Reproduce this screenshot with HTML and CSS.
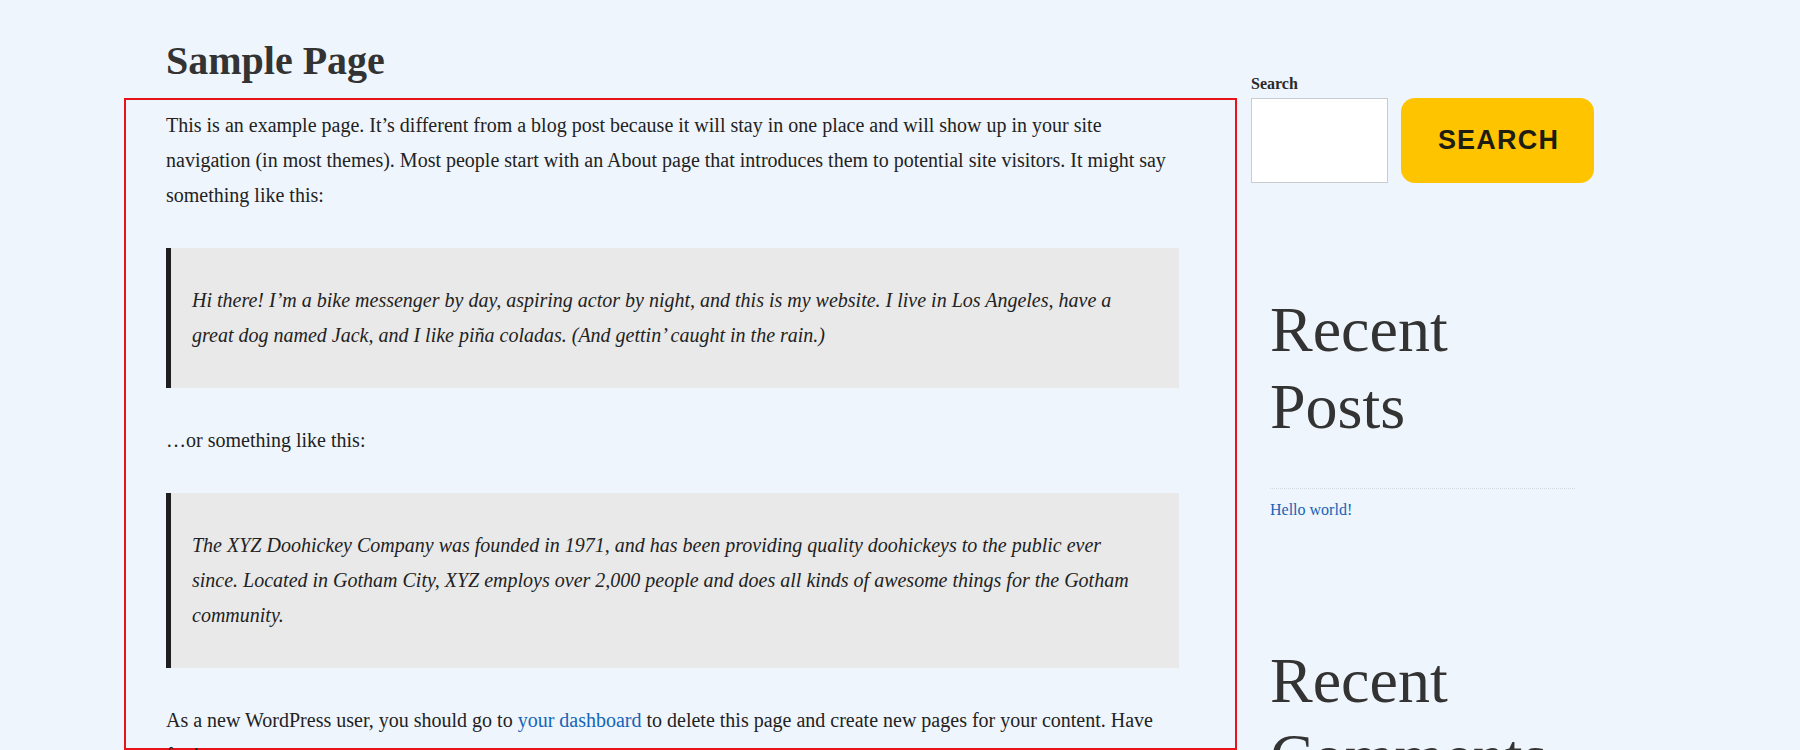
FILE: index.html
```html
<!DOCTYPE html>
<html lang="en">
<head>
<meta charset="utf-8">
<title>Sample Page</title>
<link rel="stylesheet" href="styles.css">
</head>
<body>
<div class="page">
  <main class="main">
    <h1 class="page-title">Sample Page</h1>
    <div class="entry">
      <p>This is an example page. It’s different from a blog post because it will stay in one place and will show up in your site navigation (in most themes). Most people start with an About page that introduces them to potential site visitors. It might say something like this:</p>
      <blockquote class="quote"><p>Hi there! I’m a bike messenger by day, aspiring actor by night, and this is my website. I live in Los Angeles, have a great dog named Jack, and I like piña coladas. (And gettin’ caught in the rain.)</p></blockquote>
      <p>…or something like this:</p>
      <blockquote class="quote"><p>The XYZ Doohickey Company was founded in 1971, and has been providing quality doohickeys to the public ever since. Located in Gotham City, XYZ employs over 2,000 people and does all kinds of awesome things for the Gotham community.</p></blockquote>
      <p>As a new WordPress user, you should go to <a class="link" href="#">your dashboard</a> to delete this page and create new pages for your content. Have fun!</p>
    </div>
  </main>
  <aside class="sidebar">
    <form class="search">
      <label class="search-label" for="s">Search</label>
      <div class="search-row">
        <input class="search-input" id="s" type="text">
        <button class="search-btn" type="button">SEARCH</button>
      </div>
    </form>
    <section class="widget">
      <h2 class="widget-title">Recent Posts</h2>
      <ul class="widget-list">
        <li><a class="link" href="#">Hello world!</a></li>
      </ul>
    </section>
    <section class="widget widget-next">
      <h2 class="widget-title">Recent Comments</h2>
    </section>
  </aside>
</div>
</body>
</html>
```
FILE: styles.css
```css
html, body {
  margin: 0;
  padding: 0;
  background: #eff5fc;
  overflow: hidden;
}
body {
  font-family: "Liberation Serif", "Times New Roman", serif;
  color: #222;
}
.page {
  display: flex;
  align-items: flex-start;
  padding-left: 166px;
}
.main {
  width: 1013px;
  flex: none;
  padding-top: 37px;
}
.page-title {
  margin: 0 0 13px;
  font-size: 40px;
  line-height: 48px;
  font-weight: 700;
  color: #333;
}
.entry {
  box-sizing: border-box;
  height: 652px;
  margin-left: -42px;
  margin-right: -58px;
  padding: 7.5px 56px 0 40px;
  border: 2px solid #e8131a;
  font-size: 20px;
  line-height: 35px;
}
.entry p {
  margin: 0 0 35px;
}
.quote {
  margin: 0 0 35px;
  padding: 35px 40px 35px 21px;
  background: #e9e9e9;
  border-left: 5px solid #1e1e1e;
  font-style: italic;
}
.quote p {
  margin: 0 !important;
}
.link {
  color: #1464b8;
  text-decoration: none;
}
.sidebar {
  width: 343px;
  flex: none;
  margin-left: 72px;
  padding-top: 74px;
}
.search-label {
  display: block;
  font-size: 16px;
  line-height: 19px;
  font-weight: 700;
  color: #2a2a2a;
  margin-bottom: 5px;
}
.search-row {
  display: flex;
  gap: 13px;
}
.search-input {
  box-sizing: border-box;
  width: 137px;
  height: 85px;
  margin: 0;
  border: 1px solid #c8cbd0;
  background: #fff;
}
.search-btn {
  width: 193px;
  height: 85px;
  margin: 0;
  border: 0;
  border-radius: 14px;
  background: #ffc400;
  color: #1d1d12;
  font-family: "Liberation Sans", Arial, sans-serif;
  font-weight: 700;
  font-size: 27px;
  letter-spacing: 1.2px;
  padding: 0 0 0 2px;
}
.widget {
  margin-top: 109px;
  padding: 0 19px;
}
.widget-next {
  margin-top: 121px;
}
.widget-title {
  margin: 0;
  font-size: 64px;
  line-height: 76.8px;
  font-weight: 400;
  color: #333;
}
.widget-list {
  list-style: none;
  margin: 42px 0 0;
  padding: 9px 0 0;
  border-top: 1px dotted #d4d8dd;
  font-size: 16px;
  line-height: 24px;
}
```
